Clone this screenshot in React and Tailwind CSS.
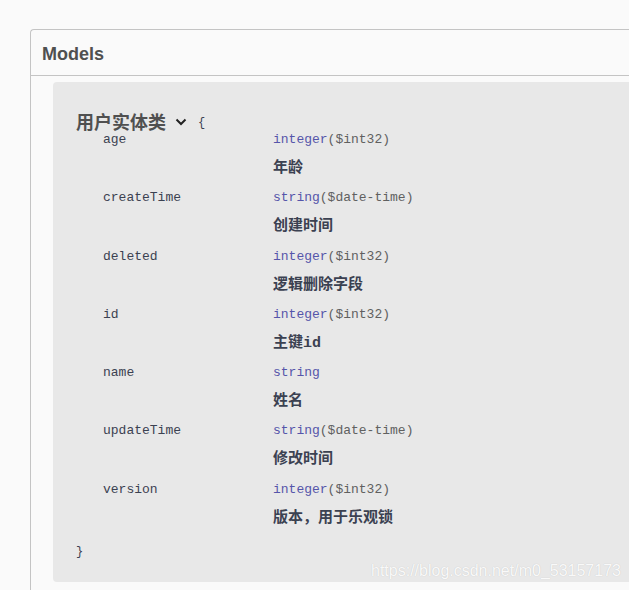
import React from "react";

const props = [
  { name: "age", type: "integer", fmt: "($int32)", desc: "年龄" },
  { name: "createTime", type: "string", fmt: "($date-time)", desc: "创建时间" },
  { name: "deleted", type: "integer", fmt: "($int32)", desc: "逻辑删除字段" },
  { name: "id", type: "integer", fmt: "($int32)", desc: "主键id" },
  { name: "name", type: "string", fmt: "", desc: "姓名" },
  { name: "updateTime", type: "string", fmt: "($date-time)", desc: "修改时间" },
  { name: "version", type: "integer", fmt: "($int32)", desc: "版本，用于乐观锁" },
];

const mono = "font-['Liberation_Mono','Noto_Sans_CJK_SC',monospace]";

export default function App() {
  return (
    <div className="relative w-[629px] h-[590px] overflow-hidden bg-[#fafafa] pt-[29px] pl-[30px]">
      <div className="w-[700px] h-[600px] border-l border-t border-[#c4c4c4] rounded-tl-[4px]">
        <div className="h-[46px] border-b border-[#c4c4c4] flex items-center pl-[11px] pt-[4px]">
          <span className="font-['Liberation_Sans',sans-serif] font-bold text-[18px] text-[#505050]">Models</span>
        </div>
        <div className="ml-[22px] mt-[6px] h-[500px] bg-[#e8e8e8] rounded-l-[4px] pl-[23px] pt-[28px]">
          <div className="flex items-center h-[21px]">
            <span className="font-['Noto_Sans_CJK_SC',sans-serif] font-bold text-[18px] leading-[18px] text-[#505050]">用户实体类</span>
            <svg className="ml-[9px] mt-[2px]" width="12" height="8" viewBox="0 0 12 8">
              <path d="M1.5 1.5 L6 6 L10.5 1.5" fill="none" stroke="#222" strokeWidth="2" />
            </svg>
            <span className={`${mono} ml-[11px] mt-[4px] text-[12px] text-[#3b4151]`}>{"{"}</span>
          </div>
          <div className="pl-[27px]">
            {props.map((p) => (
              <div key={p.name} className="flex h-[58.3px]">
                <div className={`${mono} w-[170px] h-[18px] leading-[18px] text-[13px] text-[#3b4151]`}>{p.name}</div>
                <div className="flex flex-col">
                  <div className={`${mono} h-[18px] leading-[18px] text-[13px]`}>
                    <span className="text-[#55a]">{p.type}</span>
                    <span className="text-[#606060]">{p.fmt}</span>
                  </div>
                  <div className={`${mono} mt-[11px] h-[18px] leading-[18px] text-[15px] font-bold text-[#3b4151]`}>{p.desc}</div>
                </div>
              </div>
            ))}
          </div>
          <div className={`${mono} mt-[4px] h-[18px] leading-[18px] text-[12px] text-[#3b4151]`}>{"}"}</div>
        </div>
      </div>
      <div className="absolute left-[371px] top-[561px] font-['Liberation_Sans',sans-serif] text-[16px] leading-[20px] text-white/90 [text-shadow:0_0_1px_rgba(0,0,0,0.2)]">
        https://blog.csdn.net/m0_53157173
      </div>
    </div>
  );
}
